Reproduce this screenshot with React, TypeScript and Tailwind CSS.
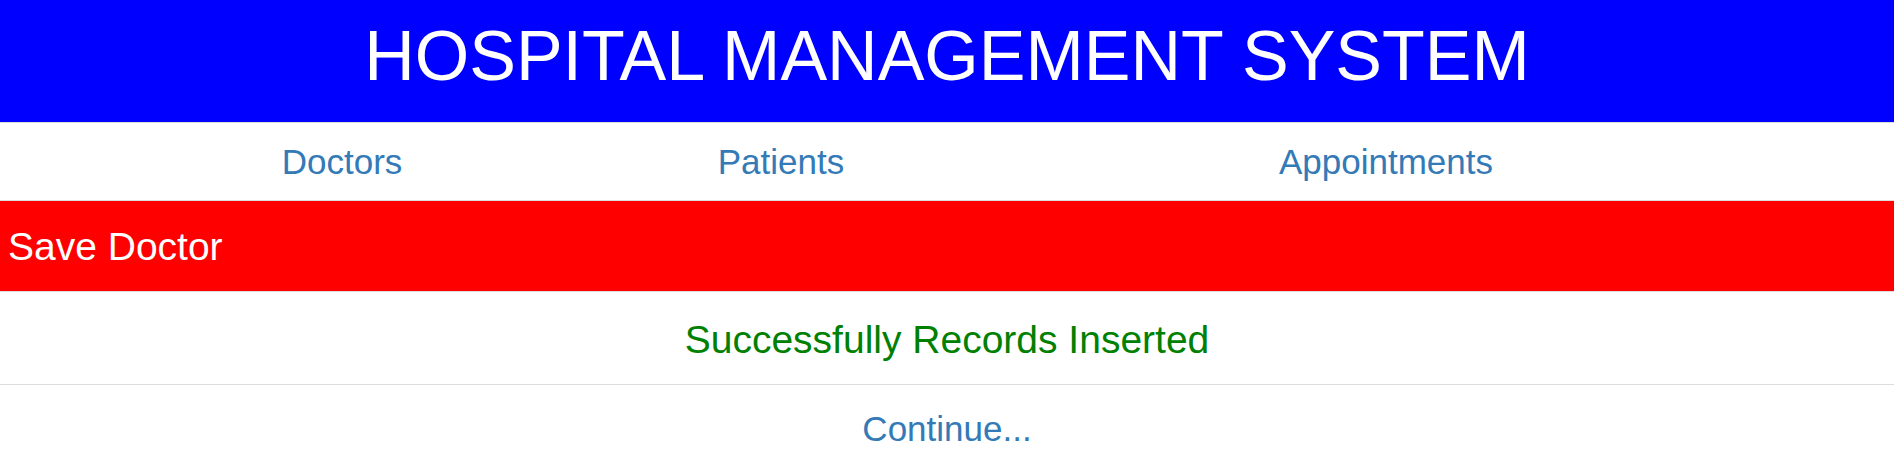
const links = ["Doctors", "Patients", "Appointments"];

export default function App() {
  return (
    <div className="min-h-screen bg-white font-['Liberation_Sans',Arial,sans-serif]">
      <header className="h-[122px] bg-[#0000ff] pt-[21px] text-center">
        <h1 className="text-[70px] leading-none text-white">HOSPITAL MANAGEMENT SYSTEM</h1>
      </header>

      <nav className="grid h-[78px] grid-cols-[684px_194px_1fr] border-t border-[#dddddd] pt-[21px] text-center">
        {links.map((label) => (
          <a key={label} href="#" className="text-[35px] leading-none text-[#337ab7]">
            {label}
          </a>
        ))}
      </nav>

      <div className="h-[91px] border-t border-[#dddddd] bg-[#ff0000] pl-[8px] pt-[26px]">
        <h2 className="text-[39px] leading-none text-white">Save Doctor</h2>
      </div>

      <div className="h-[93px] border-t border-[#dddddd] pt-[28px] text-center">
        <p className="text-[39px] leading-none text-[#008000]">Successfully Records Inserted</p>
      </div>

      <div className="border-t border-[#dddddd] pt-[26px] text-center">
        <a href="#" className="text-[35px] leading-none text-[#337ab7]">
          Continue...
        </a>
      </div>
    </div>
  );
}
